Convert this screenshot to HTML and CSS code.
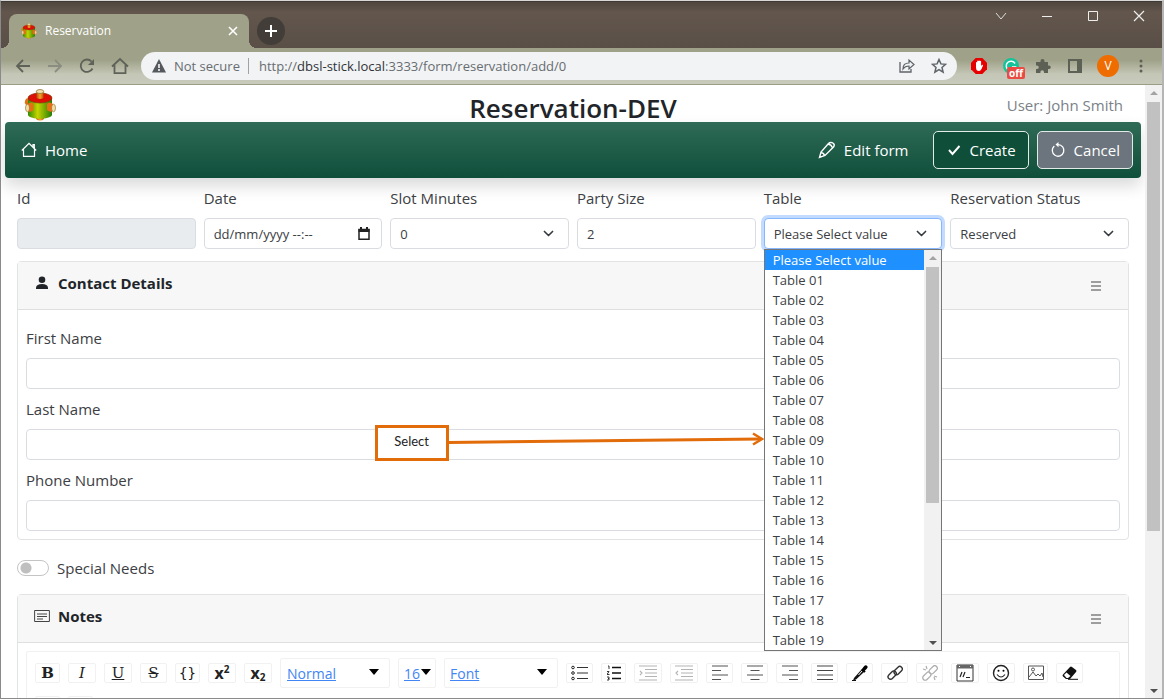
FILE: index.html
```
<!DOCTYPE html>
<html lang="en">
<head>
<meta charset="utf-8">
<title>Reservation</title>
<link rel="stylesheet" href="styles.css">
</head>
<body>
<svg class="defs" aria-hidden="true">
  <defs>
    <linearGradient id="green"><stop offset="0" stop-color="#2f8a06"/><stop offset=".4" stop-color="#c5d400"/><stop offset="1" stop-color="#237d08"/></linearGradient>
    <linearGradient id="orange"><stop offset="0" stop-color="#b85208"/><stop offset=".5" stop-color="#f5a32a"/><stop offset="1" stop-color="#c25207"/></linearGradient>
    <symbol id="logo" viewBox="0 0 32 32">
      <path d="M1 12q1-4 4-2v8l-3-2q-2-2-1-4z" fill="#e2720d"/>
      <path d="M12 26h8v4q-4 3-8 0z" fill="url(#orange)"/>
      <path d="M4 9v17c2 5 22 5 24 0V9z" fill="url(#green)"/>
      <ellipse cx="16" cy="9" rx="12" ry="5" fill="#dc1005" stroke="#7e3c10" stroke-width=".7"/>
      <path d="M12.500 2h7v7q-3.500 2-7 0z" fill="url(#orange)"/>
      <ellipse cx="16" cy="2.500" rx="3.700" ry="2" fill="#efe2b0" stroke="#80671f" stroke-width=".7"/>
      <path d="M3.500 15q4-3 6 0v6q-3 3-6 1z" fill="#ec6e13"/><ellipse cx="3.500" cy="19" rx="2" ry="3.800" fill="#f2dfa4" stroke="#8b6428" stroke-width=".6"/>
      <path d="M29 15q-4-3-6 0v6q3 3 6 1z" fill="#ec6e13"/><ellipse cx="29.500" cy="19" rx="2" ry="3.800" fill="#f2dfa4" stroke="#8b6428" stroke-width=".6"/>
    </symbol>
  </defs>
</svg>
<div class="window">
  <header class="tabstrip">
    <div class="tab">
      <svg class="favicon"><use href="#logo"/></svg>
      <span class="tab-title">Reservation</span>
      <button class="plain" aria-label="Close tab"><svg width="10" height="10" viewBox="0 0 10 10"><path d="M1 1l8 8M9 1l-8 8" stroke="#fff" stroke-width="1.600"/></svg></button>
    </div>
    <button class="new-tab" aria-label="New tab"><svg width="12" height="12" viewBox="0 0 12 12"><path d="M6 0v12M0 6h12" stroke="#fff" stroke-width="2"/></svg></button>
    <div class="window-controls">
      <button class="plain" aria-label="Search tabs"><svg width="12" height="12" viewBox="0 0 12 12"><path d="M1 3l5 6 5-6" fill="none" stroke="#ddd"/></svg></button>
      <button class="plain" aria-label="Minimize"><svg width="12" height="12" viewBox="0 0 12 12"><path d="M1 6.500h10" stroke="#eee"/></svg></button>
      <button class="plain" aria-label="Maximize"><svg width="12" height="12" viewBox="0 0 12 12"><path d="M1.500 1.500h9v9h-9z" fill="none" stroke="#eee"/></svg></button>
      <button class="plain" aria-label="Close"><svg width="12" height="12" viewBox="0 0 12 12"><path d="M1 1l10 10M11 1L1 11" stroke="#eee" stroke-width="1.200"/></svg></button>
    </div>
  </header>
  <div class="browserbar">
    <nav class="nav-buttons">
      <button class="plain" aria-label="Back"><svg width="16" height="16" viewBox="0 0 16 16"><path d="M15 8H2M8 2L2 8l6 6" fill="none" stroke="#5f6259" stroke-width="1.800"/></svg></button>
      <button class="plain" aria-label="Forward"><svg width="16" height="16" viewBox="0 0 16 16"><path d="M1 8h13M8 2l6 6-6 6" fill="none" stroke="#8a8d80" stroke-width="1.800"/></svg></button>
      <button class="plain" aria-label="Reload"><svg width="16" height="16" viewBox="0 0 16 16"><path d="M13.500 10.500a6.200 6.200 0 1 1-1-7" fill="none" stroke="#5f6259" stroke-width="1.800"/><path d="M15 1v6H9z" fill="#5f6259"/></svg></button>
      <button class="plain" aria-label="Home page"><svg width="18" height="18" viewBox="0 0 18 18"><path d="M1 9.500L9 2l8 7.500M3.500 8v8.200h11V8" fill="none" stroke="#5f6259" stroke-width="1.800"/></svg></button>
    </nav>
    <div class="address">
      <svg width="14" height="14" viewBox="0 0 14 14"><path d="M7 0l7 13.500H0z" fill="#55595e"/><path d="M7 5v4M7 10v2" stroke="#fff" stroke-width="1.500"/></svg>
      <span class="secure">Not secure</span>
      <span class="url">http://<b>dbsl-stick.local</b>:3333/form/reservation/add/0</span>
      <button class="plain" aria-label="Share"><svg width="16" height="16" viewBox="0 0 16 16"><path d="M1 4v10h11v-3" fill="none" stroke="#5f6368" stroke-width="1.300"/><path d="M4 11q0-6 6-6V2l5 4.500L10 11V8Q6 8 4 11z" fill="none" stroke="#5f6368" stroke-width="1.200"/></svg></button>
      <button class="plain" aria-label="Bookmark"><svg width="16" height="16" viewBox="0 0 16 16"><path d="M8 1.500l1.900 4.400 4.700.4-3.600 3.100 1.100 4.700L8 11.600l-4.100 2.500L5 9.400 1.400 6.300l4.700-.4z" fill="none" stroke="#5f6368" stroke-width="1.500"/></svg></button>
    </div>
    <div class="extensions">
      <button class="plain" aria-label="Ad blocker"><svg width="16" height="16" viewBox="0 0 16 16"><path d="M4.700 0h6.600L16 4.700v6.600L11.300 16H4.700L0 11.300V4.700z" fill="#e60000"/><path d="M5 7V4.500q.6-.8 1.200 0V3q.7-.8 1.300 0 .7-1 1.400 0 .7-.5 1.200.5V8l1-1.200q.9-.2.900.7L10.500 11Q9.500 13 8 13 5 13 5 9.500z" fill="#fff"/></svg></button>
      <button class="plain badge-host" aria-label="Writing assistant, off"><svg width="16" height="16" viewBox="0 0 16 16"><circle cx="8" cy="8" r="8" fill="#15c39a"/><path d="M12 5.500A4.700 4.700 0 1 0 12.500 9H9" fill="none" stroke="#fff" stroke-width="1.500"/></svg><span class="badge">off</span></button>
      <button class="plain" aria-label="Extensions"><svg width="16" height="16" viewBox="0 0 16 16"><path d="M1 4h4.500V3a2 2 0 0 1 4 0v1H13v3.500h1a1.800 1.800 0 0 1 0 3.600h-1V15H9v-1a1.800 1.800 0 0 0-3.600 0v1H1v-4h1a1.800 1.800 0 0 0 0-3.600H1z" fill="#5d6055"/></svg></button>
      <button class="plain" aria-label="Side panel"><svg width="16" height="16" viewBox="0 0 16 16"><path d="M2 2h12v12H2z" fill="none" stroke="#5d6055" stroke-width="2"/><path d="M10 2h4v12h-4z" fill="#5d6055"/></svg></button>
      <button class="avatar" aria-label="Profile">V</button>
      <button class="plain" aria-label="Menu"><svg width="16" height="16" viewBox="0 0 16 16" fill="#5d6055"><circle cx="8" cy="3" r="1.500"/><circle cx="8" cy="8" r="1.500"/><circle cx="8" cy="13" r="1.500"/></svg></button>
    </div>
  </div>
  <div class="viewport">
    <main class="page">
      <div class="masthead">
        <svg class="brand"><use href="#logo"/></svg>
        <h1>Reservation-DEV</h1>
        <span class="user">User: John Smith</span>
      </div>
      <nav class="navbar">
        <a class="nav-link home" href="#"><svg width="16" height="16" viewBox="0 0 16 16"><path d="M.8 8.500L8 1.300l7.200 7.200M2.500 7v7.400h11V7M12 5V2.500h1.300V6.500" fill="none" stroke="#fff" stroke-width="1.200"/></svg>Home</a>
        <a class="nav-link" href="#"><svg width="18" height="18" viewBox="0 0 18 18"><path d="M1.500 16.500l1.500-5.500L10.500 2.500q1.500-1.500 3.500-.8l1.500.8q1.500 1.500 0 3.500L7 14.500zM10 3.200q3-.2 4.500 3.500M3 11.500q3 .5 3.500 3" fill="none" stroke="#fff" stroke-width="1.400"/></svg>Edit form</a>
        <button class="btn create"><svg width="16" height="16" viewBox="0 0 16 16"><path d="M3 8l3.500 4L13.500 4" fill="none" stroke="#fff" stroke-width="1.900"/></svg>Create</button>
        <button class="btn cancel"><svg width="16" height="16" viewBox="0 0 16 16"><path d="M4.300 4A5.800 5.800 0 1 0 8 2.600" fill="none" stroke="#fff" stroke-width="1.300"/><path d="M8.500 0v5.200L5.500 2.600z" fill="#fff"/></svg>Cancel</button>
      </nav>
      <form class="form">
        <div class="fields">
          <div class="field"><label for="id">Id</label><input id="id" class="control" disabled></div>
          <div class="field"><label for="date">Date</label>
            <div class="control date"><input id="date" value="dd/mm/yyyy --:--"><button type="button" class="plain" aria-label="Open calendar"><svg width="12" height="14" viewBox="0 0 12 14"><path d="M1 2.500h10v9.800H1z" fill="none" stroke="#222" stroke-width="1.500"/><path d="M.5 2h11v3H.5zM2 0h2v2H2zM8 0h2v2H8z" fill="#222"/></svg></button></div>
          </div>
          <div class="field"><label for="slot">Slot Minutes</label><select id="slot" class="control"><option>0</option></select></div>
          <div class="field"><label for="party">Party Size</label><input id="party" class="control" value="2"></div>
          <div class="field open"><label for="table">Table</label><select id="table" class="control focused"><option>Please Select value</option></select>
            <div class="popup">
              <ul class="options" role="listbox" aria-label="Table">
                <li role="option" aria-selected="true">Please Select value</li>
                <li role="option">Table 01</li><li role="option">Table 02</li><li role="option">Table 03</li><li role="option">Table 04</li><li role="option">Table 05</li><li role="option">Table 06</li><li role="option">Table 07</li><li role="option">Table 08</li><li role="option">Table 09</li><li role="option">Table 10</li><li role="option">Table 11</li><li role="option">Table 12</li><li role="option">Table 13</li><li role="option">Table 14</li><li role="option">Table 15</li><li role="option">Table 16</li><li role="option">Table 17</li><li role="option">Table 18</li><li role="option">Table 19</li>
              </ul>
              <div class="scrollbar"><i class="up"></i><span class="thumb list-thumb"></span><i class="down"></i></div>
              <div class="callout"><span class="callout-box">Select</span><svg width="316" height="36" viewBox="0 0 316 36"><path d="M0 17.500L312 14" stroke="#e36c0a" stroke-width="3"/><path d="M304 8.500l9 5.500-9 5.500" fill="none" stroke="#e36c0a" stroke-width="2.500"/></svg></div>
            </div>
          </div>
          <div class="field"><label for="status">Reservation Status</label><select id="status" class="control"><option>Reserved</option></select></div>
        </div>
        <section class="card">
          <header class="card-header"><svg width="16" height="16" viewBox="0 0 16 16"><circle cx="8" cy="4.800" r="3.300" fill="#212529"/><path d="M2 14v-1.500Q2.500 9 8 9t6 3.500V14z" fill="#212529"/></svg><h2>Contact Details</h2><button type="button" class="plain" aria-label="Contact section menu"><svg width="10" height="10" viewBox="0 0 10 10"><path d="M0 1h10M0 5h10M0 9h10" stroke="#444"/></svg></button></header>
          <div class="card-body">
            <div class="field"><label for="first">First Name</label><input id="first" class="control"></div>
            <div class="field"><label for="last">Last Name</label><input id="last" class="control"></div>
            <div class="field"><label for="phone">Phone Number</label><input id="phone" class="control"></div>
          </div>
        </section>
        <div class="switch-row"><input type="checkbox" role="switch" id="needs" class="switch"><label for="needs">Special Needs</label></div>
        <section class="card">
          <header class="card-header"><svg width="16" height="16" viewBox="0 0 16 16"><path d="M.600 2.500h14.800v11H.6zM3 6h10M3 8.500h10M3 11h6" fill="none" stroke="#444"/></svg><h2>Notes</h2><button type="button" class="plain" aria-label="Notes section menu"><svg width="10" height="10" viewBox="0 0 10 10"><path d="M0 1h10M0 5h10M0 9h10" stroke="#444"/></svg></button></header>
          <div class="notes-body">
            <div class="toolbar">
              <button type="button" class="tool serif" aria-label="Bold"><b>B</b></button>
              <button type="button" class="tool serif wide" aria-label="Italic"><i>I</i></button>
              <button type="button" class="tool serif wide" aria-label="Underline"><u>U</u></button>
              <button type="button" class="tool serif mid" aria-label="Strikethrough"><s>S</s></button>
              <button type="button" class="tool mono" aria-label="Code">{}</button>
              <button type="button" class="tool script wide" aria-label="Superscript"><span>x<sup>2</sup></span></button>
              <button type="button" class="tool script wide" aria-label="Subscript"><span>x<sub>2</sub></span></button>
              <a class="pick block" href="#">Normal</a>
              <a class="pick size" href="#">16</a>
              <a class="pick font" href="#">Font</a>
              <button type="button" class="tool mid" aria-label="Bulleted list"><svg width="18" height="16" viewBox="0 0 18 16"><path d="M6 2.500h11M6 8h11M6 13.500h11" stroke="#333" stroke-width="1.200"/><g fill="none" stroke="#222"><circle cx="2" cy="2.500" r="1.300"/><circle cx="2" cy="8" r="1.300"/><circle cx="2" cy="13.500" r="1.300"/></g></svg></button>
              <button type="button" class="tool" aria-label="Numbered list"><svg width="14" height="16" viewBox="0 0 14 16"><path d="M5 2.500h9M5 8h9M5 13.500h9" stroke="#111" stroke-width="1.600"/><path d="M1 1h1v3M0 6.500h2L0 9.500h2.500M0 12h2v1.500H1h1V15H0" fill="none" stroke="#222" stroke-width=".9"/></svg></button>
              <button type="button" class="tool wide" disabled aria-label="Indent"><svg width="18" height="16" viewBox="0 0 18 16"><path d="M0 1h18M6 4.500h12M6 8h12M6 11.500h12M0 15h18M1 6l2 2-2 2" fill="none" stroke="#444" stroke-width="1.100"/></svg></button>
              <button type="button" class="tool wide" disabled aria-label="Outdent"><svg width="18" height="16" viewBox="0 0 18 16"><path d="M0 1h18M6 4.500h12M6 8h12M6 11.500h12M0 15h18M3 6L1 8l2 2" fill="none" stroke="#444" stroke-width="1.100"/></svg></button>
              <button type="button" class="tool mid" aria-label="Align left"><svg width="16" height="16" viewBox="0 0 16 16"><path d="M0 1h16M0 5.500h9M0 10h16M0 14.500h9" stroke="#555" stroke-width="1.200"/></svg></button>
              <button type="button" class="tool mid" aria-label="Align center"><svg width="16" height="16" viewBox="0 0 16 16"><path d="M0 1h16M3.500 5.500h9M0 10h16M3.500 14.500h9" stroke="#555" stroke-width="1.200"/></svg></button>
              <button type="button" class="tool mid" aria-label="Align right"><svg width="16" height="16" viewBox="0 0 16 16"><path d="M0 1h16M7 5.500h9M0 10h16M7 14.500h9" stroke="#555" stroke-width="1.200"/></svg></button>
              <button type="button" class="tool mid" aria-label="Justify"><svg width="16" height="16" viewBox="0 0 16 16"><path d="M0 1h16M0 5.500h16M0 10h16M0 14.500h16" stroke="#444" stroke-width="1.200"/></svg></button>
              <button type="button" class="tool mid" aria-label="Text color"><svg width="16" height="16" viewBox="0 0 16 16"><path d="M1 15.500l1-2.500 8-9 2.500 2.500-8.500 8z" fill="#111"/><path d="M10 4l3 3" stroke="#000" stroke-width="2"/><ellipse cx="13" cy="3" rx="3" ry="1.900" transform="rotate(-45 13 3)"/><path d="M6.500 10l3.500-4" stroke="#fff"/><path d="M0 15.500h4" stroke="#111"/></svg></button>
              <button type="button" class="tool mid" aria-label="Link"><svg width="16" height="16" viewBox="0 0 16 16" fill="none" stroke="#333" stroke-width="1.400"><rect x="6" y="3" width="9.500" height="5" rx="2.500" transform="rotate(-45 11 5)"/><rect x="1" y="8" width="9.500" height="5" rx="2.500" transform="rotate(-45 5 11)"/></svg></button>
              <button type="button" class="tool mid" disabled aria-label="Unlink"><svg width="16" height="16" viewBox="0 0 16 16" fill="none" stroke="#333" stroke-width="1.200"><rect x="6.500" y="2.500" width="9.500" height="5" rx="2.500" transform="rotate(-45 11 5)"/><rect x="0" y="8.500" width="9.500" height="5" rx="2.500" transform="rotate(-45 5 11)"/><path d="M1 4l3 1M4 1l1 3M12 12l1 3M12 11l3 1"/></svg></button>
              <button type="button" class="tool wide" aria-label="Embed"><svg width="18" height="18" viewBox="0 0 18 18"><path d="M1 1h16v16H1z" fill="none" stroke="#333"/><path d="M1 1h16v3.500H1z" fill="#666"/><path d="M3 2.500h1M14 2.500h1" stroke="#fff"/><path d="M4 13l2-5M7 13l2-5M10 13.500h4" stroke="#222" stroke-width="1.200"/></svg></button>
              <button type="button" class="tool wide" aria-label="Emoji"><svg width="18" height="18" viewBox="0 0 18 18"><circle cx="9" cy="9" r="7.500" fill="none" stroke="#222" stroke-width="1.400"/><path d="M5 10.500q4 5 8 0" fill="none" stroke="#222" stroke-width="1.200"/><circle cx="6.500" cy="6.800" r="1"/><circle cx="11.500" cy="6.800" r="1"/></svg></button>
              <button type="button" class="tool" aria-label="Image"><svg width="16" height="16" viewBox="0 0 16 16"><path d="M.5 1h15v13.500H.5zM1 12l4-5 3 4 2-2 2 2 2-3 1 4" fill="none" stroke="#555"/><circle cx="5" cy="4.500" r="1.500" fill="none" stroke="#555"/></svg></button>
              <button type="button" class="tool mid" aria-label="Remove formatting"><svg width="16" height="16" viewBox="0 0 16 16"><path d="M1 9.500L8 2q1-1 2 0l4 3q1 1 0 2l-6 7H4l-3-2.500q-1-1 0-2z" fill="#111"/><path d="M2 10l2.500-2.500 4 3.500L6 13H4.500z" fill="#fff"/><path d="M6 14.300h10" stroke="#111"/></svg></button>
              <button type="button" class="tool" aria-label="Undo"><svg width="16" height="16" viewBox="0 0 16 16"><path d="M6 2L2 6l4 4M2 6h7q5 0 5 7" fill="none" stroke="#444"/></svg></button>
              <button type="button" class="tool" aria-label="Redo"><svg width="16" height="16" viewBox="0 0 16 16"><path d="M10 2l4 4-4 4M14 6H7q-5 0-5 7" fill="none" stroke="#444"/></svg></button>
            </div>
          </div>
        </section>
      </form>
    </main>
    <div class="scrollbar page-scroll"><i class="up"></i><span class="thumb page-thumb"></span><i class="down"></i></div>
  </div>
</div>
</body>
</html>
```
FILE: styles.css
```
* { box-sizing: border-box; }
body { margin: 0; font-family: "Open Sans", "Noto Sans", sans-serif; font-size: 15px; line-height: 24px; color: #212529; }
.defs { position: absolute; width: 0; height: 0; }
svg { display: block; flex: none; }
button, input, select { font: inherit; color: inherit; }
button { padding: 0; cursor: pointer; }
.plain { border: 0; background: none; display: flex; align-items: center; justify-content: center; }

.window { height: calc(100vh - 1px); display: flex; flex-direction: column; overflow: hidden; background: #fff; border: 1px solid #8a8a8a; border-top-color: #d8d8d8; border-right: 2px solid #b5b5b5; }

.tabstrip { height: 47px; flex: none; display: flex; align-items: flex-end; background: linear-gradient(#4f473f, #62564d 10px, #5a4f46); border-top: 1px solid #3f3933; }
.tab { position: relative; width: 240px; height: 34px; margin-left: 8px; padding: 0 11px 0 12px; display: flex; align-items: center; gap: 8px; border-radius: 8px 8px 0 0; background: #9fa288; color: #fff; font-size: 12px; }
.tab::before, .tab::after { content: ""; position: absolute; bottom: 0; width: 8px; height: 8px; }
.tab::before { left: -8px; background: radial-gradient(circle at 0 0, transparent 8px, #9fa288 8px); }
.tab::after { right: -8px; background: radial-gradient(circle at 100% 0, transparent 8px, #9fa288 8px); }
.tab-title { flex: 1; }
.favicon { width: 16px; height: 16px; }
.new-tab { width: 28px; height: 28px; margin: 0 0 3px 8px; border: 0; border-radius: 50%; background: #423d38; display: flex; align-items: center; justify-content: center; }
.window-controls { margin-left: auto; align-self: flex-start; display: flex; gap: 34px; padding: 8px 17px 0 0; }

.browserbar { height: 37px; flex: none; display: flex; align-items: center; padding: 0 13px 0 14px; background: linear-gradient(#9fa288, #9fa288 12px, #c4c6b6 26px, #c8cbbb); border-bottom: 1px solid #9b9d84; }
.nav-buttons { display: flex; align-items: center; gap: 16px; margin-right: 12px; }
.address { flex: 1; height: 28px; border-radius: 14px; background: #f1f3f5; display: flex; align-items: center; padding: 0 10px 0 11px; gap: 16px; font-size: 13px; color: #686c70; }
.secure { margin-left: -8px; padding-right: 8px; border-right: 1px solid #a0a3a6; line-height: 16px; }
.url { flex: 1; margin-left: -6px; }
.url b { font-weight: 400; color: #303236; }
.extensions { display: flex; align-items: center; gap: 16px; margin-left: 14px; }
.badge-host { position: relative; }
.badge { position: absolute; left: 4px; top: 9px; padding: 0 2px; border-radius: 2px; background: #ea4b43; color: #fff; font-size: 10px; font-weight: 700; line-height: 12px; }
.avatar { width: 22px; height: 22px; border: 0; border-radius: 50%; background: #ef6c00; color: #fff; font-size: 12px; line-height: 22px; margin: 0 -2px; }

.viewport { flex: 1; min-height: 0; display: flex; overflow: hidden; }
.page { flex: 1; min-width: 0; padding: 0 4px; overflow: hidden; }
.masthead { display: grid; grid-template-columns: 1fr auto 1fr; align-items: center; height: 37px; padding: 0 18px; }
.brand { width: 34px; height: 32px; margin-top: 2px; }
h1 { margin: 0; font-size: 26px; line-height: 32px; font-weight: 600; padding-top: 6px; height: 36px; }
.user { justify-self: end; color: #7b8187; padding-top: 2px; }

.navbar { display: flex; align-items: center; gap: 8px; height: 56px; padding: 0 8px 0 16px; border-radius: 4px; background: linear-gradient(#2f6b57, #0f4f3a); box-shadow: 0 8px 16px rgba(0, 0, 0, .15); color: #fff; font-weight: 500; }
.nav-link { display: flex; align-items: center; gap: 8px; color: #fff; text-decoration: none; margin-right: 16px; }
.home { margin-right: auto; }
.btn { display: flex; align-items: center; gap: 8px; height: 38px; padding: 0 12px; border: 1px solid #e3ebe8; border-radius: 5px; color: #fff; background: #0f4f3a; }
.cancel { background: #6c757d; }

.form { padding: 8px 12px; color: #3c4044; }
.fields { display: grid; grid-template-columns: repeat(6, 1fr); gap: 8px; margin-bottom: 12px; }
.field { display: flex; flex-direction: column; gap: 8px; min-width: 0; }
.control { width: 100%; height: 31px; padding: 0 9px; border: 1px solid #d9dde2; border-radius: 4px; background: #fff; font-size: 13px; line-height: 20px; outline: 0; }
.control:disabled { background: #e9ecef; }
select.control { appearance: none; background: #fff url("data:image/svg+xml,%3Csvg xmlns='http://www.w3.org/2000/svg' viewBox='0 0 16 16'%3E%3Cpath fill='none' stroke='%23343a40' stroke-linecap='round' stroke-linejoin='round' stroke-width='2' d='m3 5.500 5 5 5-5'/%3E%3C/svg%3E") no-repeat right 13px center / 13px; }
.control.focused { border-color: #86b7fe; box-shadow: 0 0 0 3px #c2dbfe; }
.date { display: flex; align-items: center; padding-right: 11px; }
.date input { flex: 1; min-width: 0; border: 0; padding: 0; outline: 0; background: none; }

.open { position: relative; }
.popup { position: absolute; z-index: 2; top: 100%; left: 0; right: 0; display: flex; border: 1px solid #767676; background: #fff; }
.options { flex: 1; margin: 0; padding: 0; list-style: none; font-size: 13px; line-height: 20px; }
.options li { padding: 0 8px; }
.options li[aria-selected="true"] { background: #1e90ff; color: #fff; }
.scrollbar { width: 17px; flex: none; display: flex; flex-direction: column; align-items: center; background: #f1f1f1; }
.scrollbar i { width: 0; height: 0; border: 4px solid transparent; flex: none; }
.scrollbar .up { margin: 2px 0 7px; border-bottom-color: #a3a3a3; }
.scrollbar .down { margin: auto 0 1px; border-top-color: #505050; }
.thumb { width: 13px; background: #c1c1c1; }
.list-thumb { height: 59%; }
.page-scroll { width: 17px; }
.page-thumb { height: 70%; }

.callout { position: absolute; right: 100%; top: 175px; display: flex; align-items: center; }
.callout-box { width: 74px; height: 36px; border: 3px solid #e36c0a; background: #fff; font-family: Lato, sans-serif; font-size: 13px; line-height: 26px; text-align: center; color: #222; }

.card { border: 1px solid #e2e3e4; border-radius: 4px; }
.card-header { display: flex; align-items: center; height: 48px; gap: 8px; padding: 0 27px 6px 16px; background: #f7f7f7; border-bottom: 1px solid #dfdfdf; color: #212529; }
.card-header h2 { flex: 1; margin: 0; font-size: 15px; line-height: 24px; font-weight: 700; }
.card-header .plain { padding-top: 6px; }
.card-body { padding: 16px 8px 8px; display: flex; flex-direction: column; gap: 8px; }
.switch-row { display: flex; align-items: center; gap: 8px; padding: 16px 0 14px; }
.switch { appearance: none; width: 32px; height: 16px; margin: 0; border: 1px solid #c4c4c4; border-radius: 8px; background: radial-gradient(circle at 8px 7px, #bfbfbf 5px, #fff 6px); }

.notes-body { padding: 8px; }
.toolbar { display: flex; flex-wrap: wrap; align-items: center; gap: 8px; padding: 6px 8px 0; border: 1px solid #f1f1f1; border-radius: 2px; height: 96px; align-content: flex-start; }
.tool { width: 25px; height: 20px; display: flex; align-items: center; justify-content: center; border: 1px solid #f1f1f1; border-radius: 2px; background: #fff; color: #222; }
.wide { width: 28px; }
.mid { width: 27px; }
.tool:disabled svg { opacity: .4; }
.serif { font-family: "DejaVu Serif", serif; font-size: 15px; line-height: 18px; }
.mono { font-family: "DejaVu Sans Mono", monospace; font-size: 14px; line-height: 18px; }
.script { font-weight: 700; font-size: 16px; line-height: 16px; }
.script sup, .script sub { font-size: 10px; line-height: 0; }
.script sub { vertical-align: -2px; }
.pick { position: relative; height: 30px; padding: 3px 6px; border: 1px solid #f1f1f1; border-radius: 2px; color: #4285f4; font-size: 14px; line-height: 24px; }
.pick::after { content: ""; position: absolute; right: 10px; top: 10px; border: 5px solid transparent; border-top: 6px solid #000; border-bottom: 0; }
.block { width: 110px; }
.size { width: 38px; padding-left: 5px; }
.size::after { right: 4px; }
.font { width: 114px; padding-left: 5px; }
```
